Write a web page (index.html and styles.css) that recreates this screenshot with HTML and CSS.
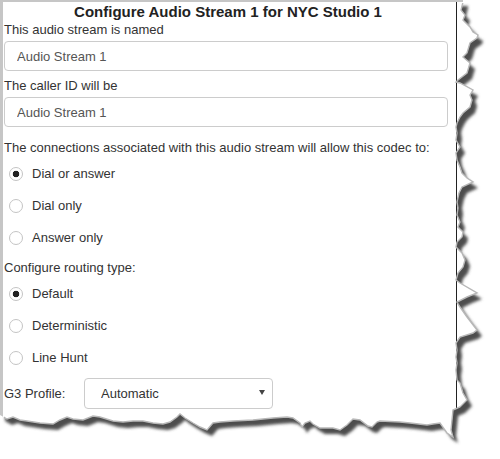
FILE: index.html
```html
<!DOCTYPE html>
<html lang="en">
<head>
    <meta charset="UTF-8">
    <title>Configure Audio Stream 1</title>
    <meta name="viewport" content="width=device-width, initial-scale=1">
    <link rel="stylesheet" href="styles.css">
</head>
<body>
    <div class="sheet">
        <div class="dialog">
            <h1 class="title">Configure Audio Stream 1 for NYC Studio 1</h1>

            <label class="field-label" for="streamName">This audio stream is named</label>
            <input class="text-input" id="streamName" type="text" value="Audio Stream 1">

            <label class="field-label" for="callerId">The caller ID will be</label>
            <input class="text-input last" id="callerId" type="text" value="Audio Stream 1">

            <div class="field-label">The connections associated with this audio stream will allow this codec to:</div>
            <div class="radio-list">
                <label class="radio-row"><input type="radio" name="dial" checked> Dial or answer</label>
                <label class="radio-row"><input type="radio" name="dial"> Dial only</label>
                <label class="radio-row"><input type="radio" name="dial"> Answer only</label>
            </div>

            <div class="field-label">Configure routing type:</div>
            <div class="radio-list">
                <label class="radio-row"><input type="radio" name="routing" checked> Default</label>
                <label class="radio-row"><input type="radio" name="routing"> Deterministic</label>
                <label class="radio-row"><input type="radio" name="routing"> Line Hunt</label>
            </div>

            <div class="select-row">
                <label class="select-label" for="g3Profile">G3 Profile:</label>
                <div class="select-wrap">
                    <select id="g3Profile" class="select">
                        <option>Automatic</option>
                    </select>
                </div>
            </div>
        </div>
    </div>

    <!-- torn paper edge drawn over the screenshot -->
    <svg class="torn" width="500" height="459" viewBox="0 0 500 459" aria-hidden="true">
        <defs>
            <path id="paper" d="M0,0 L463,0 L463,2 L461,10 L465,15 L463,20 L470,27 L473,32 L478,35 L477,38 L470,43 L467,53 L463,57 L470,63 L467,73 L458,80 L456,82 L460,83 L473,90 L470,95 L472,100 L470,107 L463,113 L460,117 L457,123 L456,127 L457,133 L456,140 L460,147 L456,153 L457,160 L460,167 L462,173 L467,178 L473,182 L462,187 L459,193 L457,202 L458,208 L457,215 L460,222 L458,227 L463,232 L462,237 L457,242 L456,247 L462,253 L465,260 L463,267 L458,273 L456,280 L460,283 L477,293 L467,297 L457,302 L460,307 L467,317 L477,330 L473,333 L460,337 L456,343 L457,350 L456,357 L457,363 L456,370 L457,380 L460,383 L463,393 L467,400 L460,407 L453,410 L452,420 L451,430 L453,437 L447,433 L440,423 L433,424 L427,425 L410,423 L400,422 L380,421 L377,422 L372,427 L368,426 L360,420 L353,419 L347,425 L340,430 L333,428 L327,428 L320,428 L313,424 L310,421 L305,423 L302,427 L300,423 L293,418 L287,417 L273,418 L253,420 L233,421 L220,422 L213,423 L207,430 L200,427 L193,423 L185,418 L180,414 L177,417 L170,422 L163,424 L153,423 L143,421 L133,421 L123,422 L113,421 L100,417 L93,416 L83,420 L73,419 L67,417 L60,420 L53,424 L40,423 L27,421 L20,420 L13,417 L7,419 L0,415 Z"/>
            <mask id="outside">
                <rect width="500" height="459" fill="#fff"/>
                <use href="#paper" fill="#000"/>
            </mask>
            <clipPath id="tearOnly">
                <rect x="4" y="3" width="496" height="456"/>
            </clipPath>
            <filter id="soft" x="-10%" y="-10%" width="120%" height="120%">
                <feGaussianBlur stdDeviation="1.5"/>
            </filter>
        </defs>
        <g mask="url(#outside)">
            <rect width="500" height="459" fill="#fff"/>
            <use href="#paper" fill="#4e4e4e" transform="translate(5,6)" filter="url(#soft)"/>
        </g>
        <use href="#paper" fill="none" stroke="#b8b8b8" stroke-width="1.4" clip-path="url(#tearOnly)"/>
    </svg>
</body>
</html>
```

FILE: styles.css
```css
body {
    margin: 0;
    background: #fff;
    font-family: "Liberation Sans", Arial, sans-serif;
    font-size: 13px;
    color: #333;
}
.sheet {
    width: 472px;
    height: 440px;
    border-top: 2px solid #c6c6c6;
    border-left: 3px solid #c6c6c6;
    box-sizing: border-box;
}
.dialog {
    width: 454px;
    height: 100%;
    border-right: 1px solid #222;
    box-sizing: border-box;
    padding: 0 8px 0 1px;
}
.title {
    margin: 0;
    padding-left: 4px;
    font-size: 15px;
    font-weight: bold;
    line-height: 19px;
    text-align: center;
    color: #222;
}
.field-label {
    display: block;
    line-height: 18px;
    margin-bottom: 2px;
}
.text-input {
    display: block;
    width: 100%;
    height: 30px;
    box-sizing: border-box;
    margin: 0 0 6px 0;
    padding: 0 12px;
    border: 1px solid #ccc;
    border-radius: 4px;
    font-family: inherit;
    font-size: 13px;
    color: #555;
    background: #fff;
}
.text-input.last {
    margin-bottom: 12px;
}
.radio-list {
    margin: 7px 0 13px 0;
}
.radio-row {
    display: flex;
    align-items: center;
    height: 18px;
    padding-left: 5px;
    gap: 9px;
}
.radio-row + .radio-row {
    margin-top: 14px;
}
.radio-row input {
    appearance: none;
    -webkit-appearance: none;
    width: 14px;
    height: 14px;
    margin: 1px 0 0 0;
    border: 1px solid #c4c4c4;
    border-radius: 50%;
    background: #fff;
    box-sizing: border-box;
}
.radio-row input:checked {
    background: radial-gradient(circle, #222 0 3px, #fff 3.6px);
}
.select-row {
    display: flex;
    align-items: center;
    margin-top: -1px;
}
.select-label {
    width: 80px;
}
.select-wrap {
    position: relative;
}
.select-wrap::after {
    content: "";
    position: absolute;
    right: 8px;
    top: 12px;
    border-left: 3.5px solid transparent;
    border-right: 3.5px solid transparent;
    border-top: 5px solid #444;
}
.select {
    appearance: none;
    -webkit-appearance: none;
    width: 189px;
    height: 31px;
    padding: 0 0 0 16px;
    border: 1px solid #ccc;
    border-radius: 4px;
    background: #fff;
    font-family: inherit;
    font-size: 13px;
    color: #333;
}
.torn {
    position: absolute;
    top: 0;
    left: 0;
    pointer-events: none;
}
```
